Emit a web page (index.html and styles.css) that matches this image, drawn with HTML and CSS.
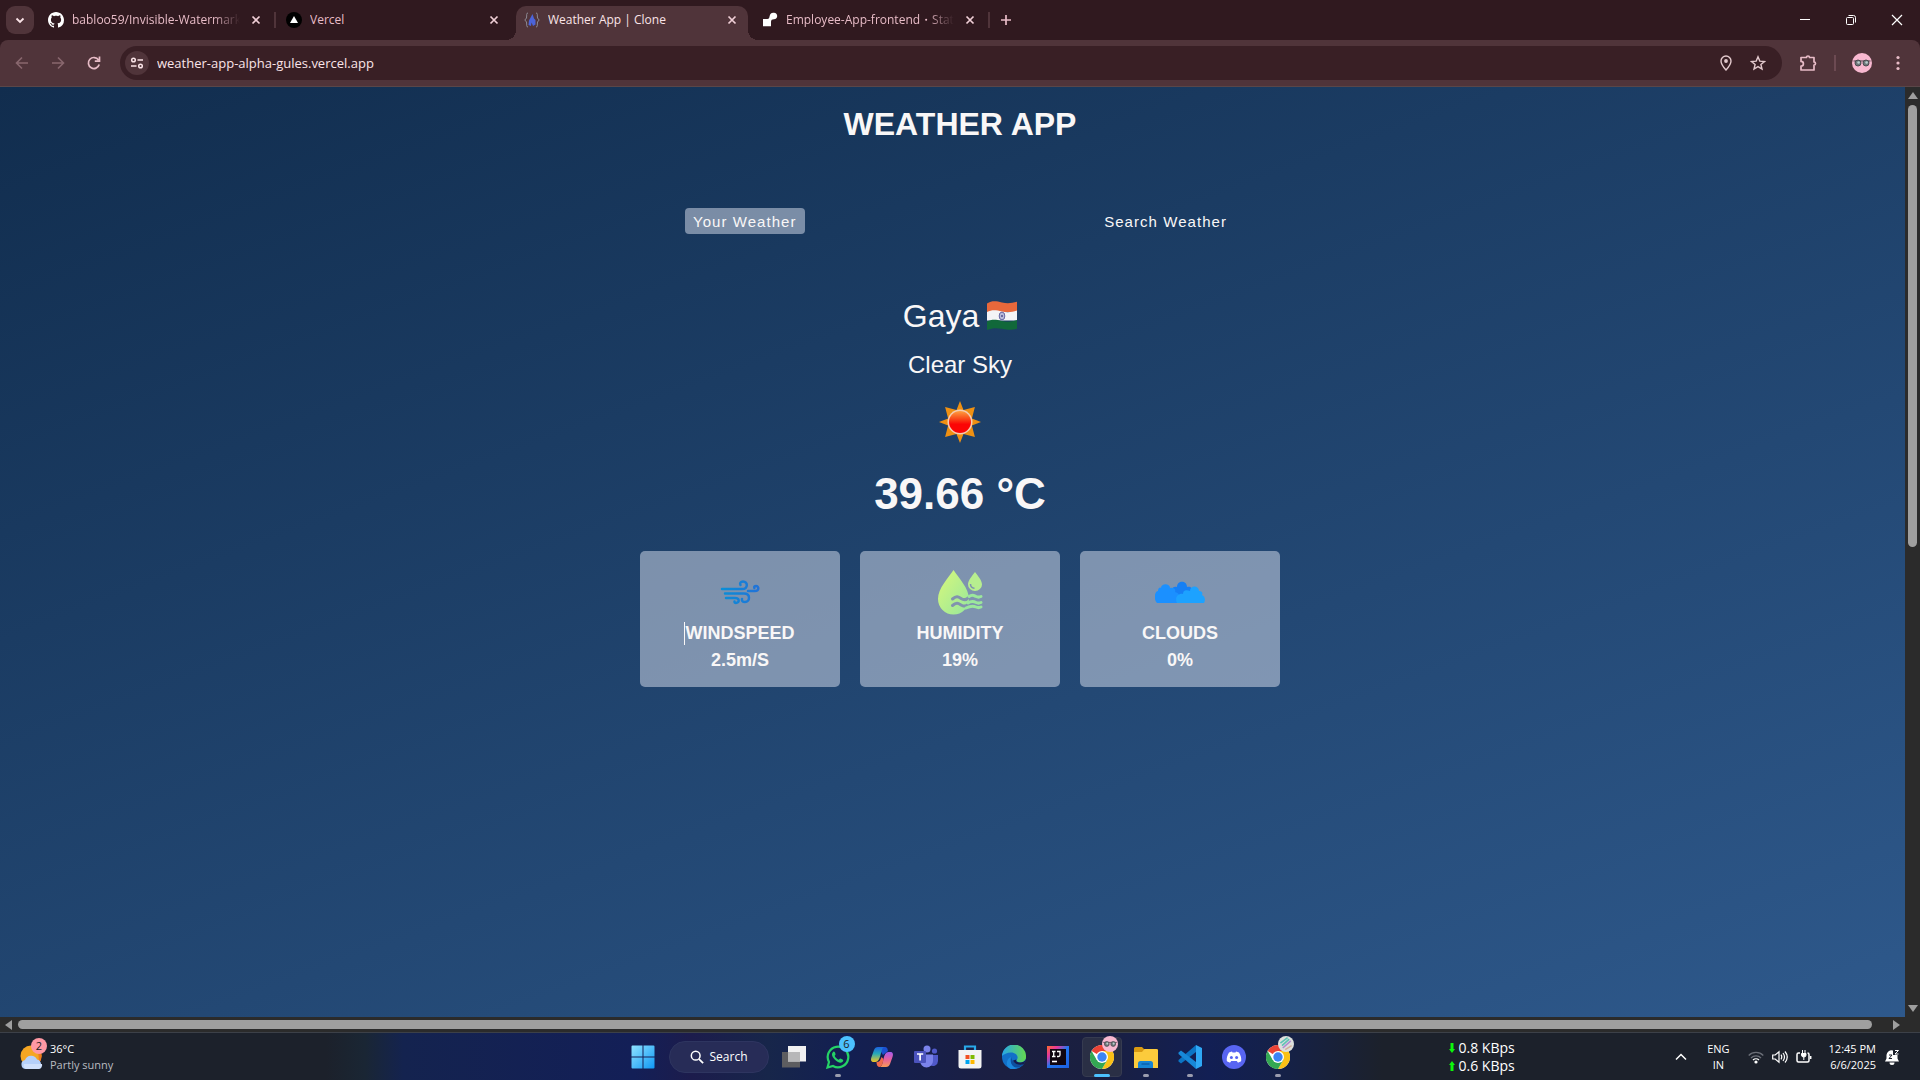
FILE: index.html
```html
<!DOCTYPE html>
<html lang="en">
<head>
<meta charset="utf-8">
<title>Weather App | Clone</title>
<link rel="stylesheet" href="styles.css">
</head>
<body>
<svg class="defs" aria-hidden="true">
  <defs>
    <linearGradient id="winBlue" x1="0" y1="0" x2="1" y2="1"><stop offset="0" stop-color="#8fe3ff"/><stop offset="1" stop-color="#0f98f5"/></linearGradient>
    <linearGradient id="dropGreen" x1="0" y1="0" x2="1" y2="1"><stop offset="0" stop-color="#d9f87a"/><stop offset="1" stop-color="#97e79c"/></linearGradient>
    <linearGradient id="windBlue" gradientUnits="userSpaceOnUse" x1="6" y1="0" x2="44" y2="0"><stop offset="0" stop-color="#0a8fd6"/><stop offset="1" stop-color="#2272d8"/></linearGradient>
    <symbol id="close" viewBox="0 0 16 16"><path d="M4.500 4.500l7 7M11.500 4.500l-7 7" stroke="currentColor" stroke-width="1.700" fill="none"/></symbol>
    <symbol id="chrome" viewBox="0 0 24 24">
      <circle cx="12" cy="12" r="12" fill="#fff"/>
      <path d="M12 12L1.600 6A12 12 0 0 1 22.400 6H12z" fill="#ea4335"/>
      <path d="M22.400 6A12 12 0 0 1 12 24l5.200-9L12 6z" fill="#fbc116"/>
      <path d="M1.600 6A12 12 0 0 0 12 24l5.200-9L12 12 6.800 15z" fill="#34a853"/>
      <circle cx="12" cy="12" r="6" fill="#fff"/><circle cx="12" cy="12" r="4.700" fill="#3d84f5"/>
    </symbol>
    <symbol id="shades" viewBox="0 0 20 20">
      <circle cx="10" cy="10" r="10" fill="#f8b8d0"/>
      <path d="M1.500 8h17" stroke="#4b4148" stroke-width="1"/>
      <circle cx="6" cy="10" r="3" fill="#6d7779" stroke="#4b4a50"/><circle cx="14" cy="10" r="3" fill="#6d7779" stroke="#4b4a50"/>
      <circle cx="6.600" cy="9.500" r="1.300" fill="#b9cdce"/><circle cx="14.600" cy="9.500" r="1.300" fill="#b9cdce"/>
    </symbol>
  </defs>
</svg>

<div class="screen">
  <header class="tab-strip">
    <button class="tab-search" aria-label="Search tabs"><svg viewBox="0 0 16 16"><path d="M4.500 6.500L8 10l3.500-3.500" fill="none" stroke="#fbe4e8" stroke-width="1.800"/></svg></button>
    <nav class="tabs" aria-label="Tabs">
      <div class="tab">
        <svg class="favicon" viewBox="0 0 16 16"><path fill="#fff" d="M8 0C3.580 0 0 3.580 0 8c0 3.540 2.290 6.530 5.470 7.590.4.070.55-.17.55-.38 0-.19-.01-.82-.01-1.490-2.010.37-2.530-.49-2.690-.94-.09-.23-.48-.94-.82-1.130-.28-.15-.68-.52-.01-.53.63-.01 1.080.58 1.230.82.72 1.210 1.870.87 2.330.66.07-.52.28-.87.51-1.070-1.780-.2-3.640-.89-3.640-3.950 0-.87.31-1.590.82-2.150-.08-.2-.36-1.020.08-2.120 0 0 .67-.21 2.200.82.64-.18 1.320-.27 2-.27s1.360.09 2 .27c1.530-1.040 2.200-.82 2.200-.82.44 1.100.16 1.920.08 2.120.51.56.82 1.270.82 2.150 0 3.070-1.870 3.750-3.650 3.950.29.25.54.73.54 1.480 0 1.070-.01 1.930-.01 2.200 0 .21.15.46.55.38A8.010 8.010 0 0 0 16 8c0-4.420-3.580-8-8-8z"/></svg>
        <span class="tab-title fade">babloo59/Invisible-Watermarkin</span>
        <button class="tab-close" aria-label="Close tab"><svg><use href="#close"/></svg></button>
      </div>
      <div class="tab divided">
        <svg class="favicon" viewBox="0 0 16 16"><circle cx="8" cy="8" r="8"/><path d="M8 4l4 7H4z" fill="#fff"/></svg>
        <span class="tab-title">Vercel</span>
        <button class="tab-close" aria-label="Close tab"><svg><use href="#close"/></svg></button>
      </div>
      <div class="tab active">
        <svg class="favicon" viewBox="0 0 16 16"><path d="M4 1C2 1 3 3 2.500 6L.8 8l1.700 2C3 13 2 15 4 15M12 1c2 0 1 2 1.500 5l1.700 2-1.700 2c-.5 3 .5 5-1.500 5" fill="none" stroke="#8d8a94" stroke-width="1"/><path d="M8.500 2L5 8.500 4.500 13 7 14l.5-3.500L9 14l2.500-1.500V8L10 6.500z" fill="#4c63d9"/></svg>
        <span class="tab-title">Weather App | Clone</span>
        <button class="tab-close" aria-label="Close tab"><svg><use href="#close"/></svg></button>
      </div>
      <div class="tab">
        <svg class="favicon" viewBox="0 0 16 16"><path d="M1 7h4.500C8 7 7 4 8.500 2 9.500.8 10.500.8 12 .8c2 0 3.200 1.400 3.200 3.200s-1.200 3.200-3.200 3.200c-2 0-3 .8-3 2.500v4.500H1z" fill="#fff"/></svg>
        <span class="tab-title fade">Employee-App-frontend・Stati</span>
        <button class="tab-close" aria-label="Close tab"><svg><use href="#close"/></svg></button>
      </div>
    </nav>
    <button class="new-tab" aria-label="New tab"><svg viewBox="0 0 16 16"><path d="M8 3v10M3 8h10" stroke="#e8bcc7" stroke-width="1.700"/></svg></button>
    <div class="window-controls">
      <button aria-label="Minimize"><svg viewBox="0 0 12 12"><path d="M1 5.500h10" stroke="#fff"/></svg></button>
      <button aria-label="Restore"><svg viewBox="0 0 12 12"><rect x="1.500" y="3.500" width="7" height="7" rx="1" fill="none" stroke="#fff"/><path d="M3.500 1.500h5a2 2 0 0 1 2 2v5" fill="none" stroke="#fff"/></svg></button>
      <button aria-label="Close window"><svg viewBox="0 0 12 12"><path d="M1 1l10 10M11 1L1 11" stroke="#fff" stroke-width="1.200"/></svg></button>
    </div>
  </header>

  <div class="toolbar">
    <button class="tool dim" aria-label="Back"><svg viewBox="0 0 16 16"><path d="M14 8H3M8 2.500L2.500 8 8 13.500" fill="none" stroke="currentColor" stroke-width="1.600"/></svg></button>
    <button class="tool dim" aria-label="Forward"><svg viewBox="0 0 16 16"><path d="M2 8h11M8 2.500L13.500 8 8 13.500" fill="none" stroke="currentColor" stroke-width="1.600"/></svg></button>
    <button class="tool" aria-label="Reload"><svg viewBox="0 0 16 16"><path d="M13.200 9.500A5.500 5.500 0 1 1 12.500 5M13.500 1.500v4.700H8.800" fill="none" stroke="currentColor" stroke-width="1.700"/></svg></button>
    <div class="address-bar">
      <button class="site-info" aria-label="Site information"><svg viewBox="0 0 16 16"><g fill="none" stroke="#fbe4e8" stroke-width="1.500"><circle cx="4.500" cy="5" r="1.800"/><circle cx="11.500" cy="11" r="1.800"/><path d="M8.500 5H14M2 11h5.500"/></g></svg></button>
      <input class="url" type="text" aria-label="Address" value="weather-app-alpha-gules.vercel.app">
      <button class="bar-icon" aria-label="Location"><svg viewBox="0 0 16 16"><path d="M8 1a5 5 0 0 1 5 5c0 3.500-5 9-5 9S3 9.500 3 6a5 5 0 0 1 5-5z" fill="none" stroke="currentColor" stroke-width="1.400"/><circle cx="8" cy="6" r="1.900" fill="currentColor"/></svg></button>
      <button class="bar-icon" aria-label="Bookmark"><svg viewBox="0 0 16 16"><path d="M8 1.800l1.800 4.300 4.700.4-3.600 3 1.100 4.600L8 11.600l-4 2.500 1.100-4.600-3.600-3 4.700-.4z" fill="none" stroke="currentColor" stroke-width="1.400"/></svg></button>
    </div>
    <button class="tool extensions" aria-label="Extensions"><svg viewBox="0 0 18 18"><path d="M2 3.500h5.500a1.500 1.500 0 0 1 3 0H15V8a1.500 1.500 0 0 1 0 3v5H2v-3.800a2.400 2.400 0 0 0 0-4.800z" fill="none" stroke="currentColor" stroke-width="1.700" stroke-linejoin="round"/></svg></button>
    <span class="tool-divider"></span>
    <button class="profile" aria-label="Profile"><svg><use href="#shades"/></svg></button>
    <button class="menu" aria-label="Menu"><svg viewBox="0 0 16 16"><g fill="currentColor"><circle cx="8" cy="2.500" r="1.600"/><circle cx="8" cy="8" r="1.600"/><circle cx="8" cy="13.500" r="1.600"/></g></svg></button>
  </div>

  <div class="viewport">
    <main class="page">
      <div class="wrapper">
        <h1>WEATHER APP</h1>
        <div class="tab-container">
          <button class="weather-tab current">Your Weather</button>
          <button class="weather-tab">Search Weather</button>
        </div>
        <section class="weather-info">
          <div class="name">
            <p class="city">Gaya</p>
            <svg class="flag" viewBox="0 0 30 30" role="img" aria-label="India"><defs><clipPath id="wave"><path d="M0 2.500C5-.5 9 0 15 1.500S25 2 30 .8v27c-5 1.500-9 1.200-15 0S5 27 0 29z"/></clipPath></defs><g clip-path="url(#wave)"><path fill="#e8683b" d="M0 0h30v11H0z"/><path fill="#f4f4f6" d="M0 11C5 8.500 9 9 15 10.500S25 11 30 9.500v10H0z"/><path fill="#11683a" d="M0 20.500C5 18 9 18.500 15 20s10 .5 15-1v11H0z"/><ellipse cx="15" cy="15" rx="2.800" ry="3.900" fill="#b9bbda" stroke="#6566a2"/><circle cx="15" cy="15" r="1" fill="#50528f"/></g></svg>
          </div>
          <p class="desc">Clear Sky</p>
          <svg class="sun" viewBox="0 0 42 42" role="img" aria-label="Clear sky"><defs><linearGradient id="sunRed" x1="0" y1="0" x2="0" y2="1"><stop offset="0" stop-color="#ffa040"/><stop offset=".35" stop-color="#f94a1a"/><stop offset=".6" stop-color="#fb0505"/></linearGradient></defs>
            <path fill="#ef9012" d="M21 0l3.500 9 11.400-2.900-3 11.400 9.100 3.500-9.100 3.500 3 11.400L24.500 33 21 42l-3.500-9-11.400 2.900 3-11.400L0 21l9.100-3.500-3-11.400L17.500 9z"/>
            <circle cx="21" cy="21" r="12.500" fill="#f5cdb5"/><circle cx="21" cy="21" r="11" fill="url(#sunRed)"/></svg>
          <p class="temp">39.66 °C</p>
          <div class="cards">
            <article class="card">
              <svg class="card-icon" viewBox="0 0 50 50"><g fill="none" stroke="url(#windBlue)" stroke-width="2.500" stroke-linecap="round"><path d="M7 22h20c6.500 0 6-7.500 1-7.500-2.500 0-3.500 2-2.500 3.500"/><path d="M10 26.500h19c7 0 6 8.500 1 8.500-2.500 0-3.500-1.500-3-3"/><path d="M11 31h9c5 0 4.500 5 1 5-1 0-1.500-.5-1.500-1.500"/><path d="M33 24h7c4.500 0 4-5 1-5-1.500 0-2.200 1-1.600 2"/></g></svg>
              <h2 class="caret">WINDSPEED</h2>
              <p>2.5m/S</p>
            </article>
            <article class="card">
              <svg class="card-icon" viewBox="0 0 50 50"><path fill="url(#dropGreen)" d="M18.500 3C13.500 11 3 21 3 32a15.500 15.500 0 0 0 31 0c0-11-10.500-21-15.500-29z"/><path fill="#b7ee8f" d="M40 5c-3 4-7 8.500-7 12.500a7 6.500 0 0 0 14 0C47 13.500 43 9 40 5z"/><path d="M35.500 17c0 2.500 1.500 4 4 4.200" fill="none" stroke="#7f92af" stroke-width="1.500"/><g fill="none" stroke-width="3" stroke-linecap="round"><path stroke="#8193ae" d="M17.500 32c4-3.500 6-2 8.500-.5s5 2 7.500-1M17.500 38.500c4-3.500 6-2 8.500-.5s5 2 7.500-1"/><path stroke="#9be79c" d="M34 29.500c3.500-2.500 5-1 7 0s3 1 5 0M33 36c4-2.500 6-1.500 8-.5s3 1 5 0M31 41c4-2 8-2 10-1s3 1 5 0"/></g></svg>
              <h2>HUMIDITY</h2>
              <p>19%</p>
            </article>
            <article class="card">
              <svg class="card-icon" viewBox="0 0 50 50"><path fill="#167ff5" d="M17 31V23c0-3 3-4 5-3 0-7 10-7 10 0 3-1 6 1 5 4v8z"/><path fill="#1b90ff" d="M2 36c-4-4-2-12 1-12 0-4 3-4 3-3 0-5 9-5 9 0 5-1 6 3 5 4 5 1 6 6 5 11z"/><path fill="#1da2ff" d="M22 36c-3-6 2-10 6-9 0-3 2-5 7-3 0-6 9-6 9 0 3 0 4 2 3 4 4 2 3 6 2 8z"/></svg>
              <h2>CLOUDS</h2>
              <p>0%</p>
            </article>
          </div>
        </section>
      </div>
    </main>
    <div class="scroll-y"><i class="arrow up"></i><i class="thumb-y"></i><i class="arrow down"></i></div>
    <div class="scroll-x"><i class="arrow left"></i><i class="thumb-x"></i><i class="arrow right"></i></div>
  </div>

  <footer class="taskbar">
    <div class="widget">
      <div class="widget-icon">
        <svg viewBox="0 0 24 26"><circle cx="11" cy="12" r="10.500" fill="#f5a623"/><path d="M18 4a10.500 10.500 0 0 1 1 15z" fill="#ee7a1d"/><path d="M6 25a4.500 4.500 0 0 1-1-8.900 6.500 6.500 0 0 1 12-.6A5 5 0 0 1 18 25z" fill="#b5d0fa"/><path d="M6 25a4 4 0 0 1-2-5h18a4 4 0 0 1-3 5z" fill="#cfe0fc"/></svg>
        <span class="badge pink">2</span>
      </div>
      <div class="widget-text"><span>36°C</span><span class="soft">Partly sunny</span></div>
    </div>

    <div class="apps">
      <button class="app" aria-label="Start"><svg viewBox="0 0 24 24"><path fill="url(#winBlue)" d="M.5 1.500a1 1 0 0 1 1-1h10v11H.5zM12.500.5h10a1 1 0 0 1 1 1v10h-11zM.5 12.500h11v11h-10a1 1 0 0 1-1-1zM12.500 12.500h11v10a1 1 0 0 1-1 1h-10z"/></svg></button>
      <button class="search"><svg viewBox="0 0 16 16"><circle cx="6.500" cy="6.500" r="5" fill="none" stroke="#fff" stroke-width="1.700"/><path d="M10.300 10.300L15 15" stroke="#fff" stroke-width="2"/></svg>Search</button>
      <button class="app" aria-label="Task view"><svg viewBox="0 0 24 24"><path fill="#5d5d60" d="M0 7h18v15.500H0z"/><path fill="#f1f1f1" d="M6 1h18v15.500H6z"/><path fill="#b7b7b8" d="M6 7h12v9.500H6z"/></svg></button>
      <button class="app open" aria-label="WhatsApp"><svg viewBox="0 0 24 24"><path d="M1.500 22.500L3 17a10.300 10.300 0 1 1 4 4z" fill="none" stroke="#25d366" stroke-width="2.200"/><path fill="#25d366" d="M8 6.500c1 0 1.500 2.500 1.500 3s-1 1.200-.8 1.600c.8 1.600 2 2.800 3.800 3.600.6.200 1.200-1.200 1.800-1.200s3 1.200 3 1.700c0 1.700-1.800 2.700-3.200 2.500C10 17 6.500 12.500 6 10c-.3-1.500 1-3.500 2-3.500z"/></svg><span class="badge sky">6</span></button>
      <button class="app" aria-label="Copilot"><svg viewBox="0 0 24 24"><defs><linearGradient id="copA" x1="0" y1="0" x2="0" y2="1"><stop stop-color="#1c62e0"/><stop offset=".45" stop-color="#26a9b8"/><stop offset="1" stop-color="#f3c521"/></linearGradient><linearGradient id="copB" x1="0" y1="0" x2="0" y2="1"><stop stop-color="#a45bf0"/><stop offset=".5" stop-color="#e8609b"/><stop offset="1" stop-color="#fb9a55"/></linearGradient></defs><path fill="#1b50d0" d="M8 2h7c2 0 2.500 2 3 4l-5 4z"/><path fill="url(#copA)" d="M8 2h6c-2 1-2.500 4-3.500 8S8 17 5.500 17H4c-3 0-3.500-2-2.500-5L4 5c.8-2 2-3 4-3z"/><path fill="url(#copB)" d="M16 22h-6c2-1 2.500-4 3.500-8s2-7 5-7H20c3 0 3.500 2 2.500 5L20 19c-.8 2-2 3-4 3z"/><path fill="#f26a4c" d="M10 22c-2.500 0-3.500-2-3.500-5 3 0 4-2 5-5l2 2c-1 5-1.500 7-3.500 8z"/></svg></button>
      <button class="app" aria-label="Teams"><svg viewBox="0 0 24 24"><circle cx="13" cy="4" r="3.500" fill="#7b83eb"/><circle cx="20.500" cy="6" r="2.600" fill="#5059c9"/><path d="M15 10h9v6a5 5 0 0 1-8 4z" fill="#5059c9"/><path d="M6 9.500h13V16a6.500 6.500 0 0 1-13 0z" fill="#7b83eb"/><rect y="6" width="12" height="12" rx="1" fill="#4b53bc"/><path d="M3 9h6.200M6.100 9v6.500" stroke="#fff" stroke-width="1.700"/></svg></button>
      <button class="app" aria-label="Store"><svg viewBox="0 0 24 24"><path d="M7 6V1.500h10V6" fill="none" stroke="#28a9ea" stroke-width="2.200"/><path fill="#f3f3f3" d="M.5 5h23v16a2.500 2.500 0 0 1-2.500 2.500H3A2.500 2.500 0 0 1 .5 21z"/><path fill="#f25022" d="M7.500 10h4v4h-4z"/><path fill="#7fba00" d="M12.500 10h4v4h-4z"/><path fill="#00a4ef" d="M7.500 15h4v4h-4z"/><path fill="#ffb900" d="M12.500 15h4v4h-4z"/></svg></button>
      <button class="app" aria-label="Edge"><svg viewBox="0 0 24 24"><defs><linearGradient id="edgeA" x1="0" y1="0" x2="1" y2="0"><stop stop-color="#27a6e8"/><stop offset="1" stop-color="#64d84e"/></linearGradient></defs><circle cx="12" cy="12" r="12" fill="#1270c8"/><path fill="url(#edgeA)" d="M0 11A12 12 0 0 1 24 12c0 4-3.500 5.500-6 5.500-3 0-4-1.500-3-3 2-3-1-7-6-7-4 0-7.500 2-9 3.500z"/><path fill="#0d4f9e" d="M9 12c-2 5 1 11 7 10.500 3-.5 5-3 6-4.500-3 1.500-11 2-13-6z"/><path d="M8.500 24C3 21.500 4 14 9 12c-1.500 5 1 11 7 10.800-2 1.200-5 1.600-7.500 1.200z" fill="#1b88de"/><path d="M14.500 14.500c-1 1.500 0 3 3.500 3 2.500 0 5-1 6-3.500-.3 2-1 3.500-2 5-1.500 1-9 1.500-11-3.500z" fill="#141d4e"/></svg></button>
      <button class="app ij" aria-label="IntelliJ IDEA"><svg viewBox="0 0 24 24"><defs><linearGradient id="ijA" x1="0" y1="0" x2="1" y2="1"><stop stop-color="#fe6a2c"/><stop offset=".25" stop-color="#e8389a"/><stop offset=".5" stop-color="#2275f0"/><stop offset="1" stop-color="#1c5fe0"/></linearGradient></defs><path fill="url(#ijA)" d="M1 1h22v22H1z"/><path d="M4 4h16v16H4z" fill="#100510"/><path d="M6 6.500h3.500M6 11.500h3.500M7.700 6.500v5M11 6.500h3v3.500q0 1.500-1.500 1.500H11" stroke="#fff" stroke-width="1.300" fill="none"/><path d="M6 16.500h5" stroke="#fff" stroke-width="1.600"/></svg></button>
      <button class="app focused" aria-label="Chrome"><svg><use href="#chrome"/></svg><span class="badge face"><svg><use href="#shades"/></svg></span></button>
      <button class="app open" aria-label="File Explorer"><svg viewBox="0 0 24 24"><path d="M0 3.500A1.500 1.500 0 0 1 1.500 2H8l2.500 2.500H24V9H0z" fill="#d99a12"/><path d="M0 7h8l2.500-3H22.500A1.500 1.500 0 0 1 24 5.500V23H0z" fill="#fccb3c"/><path d="M4 23v-4.500A2.500 2.500 0 0 1 6.500 16h10a2.500 2.500 0 0 1 2.500 2.500V23z" fill="#1684d4"/><path d="M7.500 19h8" stroke="#0a5ca8" stroke-width="1.300"/></svg></button>
      <button class="app open" aria-label="Visual Studio Code"><svg viewBox="0 0 24 24"><path fill="#0b74c4" d="M18 0v7L3 18.500.5 16.500v-1.500z"/><path fill="#1788d8" d="M18 24v-7L3 5.500.5 7.500V9z"/><path fill="#2ea8f5" d="M18 0l6 3v18l-6 3z"/></svg></button>
      <button class="app" aria-label="Discord"><svg viewBox="0 0 24 24"><circle cx="12" cy="12" r="12" fill="#5865f2"/><path fill="#fff" d="M7 7.500L10 6.500l.5 1h3l.5-1 3 1c1.800 3 2.500 5.500 2.200 8.500-1.200 1-2.300 1.400-3.400 1.600l-1-1.600H9.200l-1 1.600c-1.100-.2-2.200-.6-3.400-1.600C4.500 13 5.200 10.500 7 7.500z"/><circle cx="9.400" cy="12.600" r="1.500" fill="#5865f2"/><circle cx="14.600" cy="12.600" r="1.500" fill="#5865f2"/></svg></button>
      <button class="app open" aria-label="Chrome, second profile"><svg><use href="#chrome"/></svg><span class="badge face"><svg viewBox="0 0 20 20"><circle cx="10" cy="10" r="10" fill="#dcdfdc"/><path d="M3 9l9-7M5 12l9-8" stroke="#5cc3b4" stroke-width="2"/><path d="M6 15l10-9" stroke="#b18ad0" stroke-width="2"/><path d="M9 17l8-5" stroke="#d2b09a" stroke-width="2"/></svg></span></button>
    </div>

    <div class="tray">
      <div class="net">
        <span><svg viewBox="0 0 8 12"><path d="M2.500 1h3v6H7l-3 4-3-4h1.500z" fill="#0cf50c"/></svg>0.8 KBps</span>
        <span><svg viewBox="0 0 8 12"><path d="M2.500 11h3V5H7L4 1 1 5h1.500z" fill="#0cf50c"/></svg>0.6 KBps</span>
      </div>
      <button class="chevron" aria-label="Hidden icons"><svg viewBox="0 0 12 12"><path d="M1 8.500l5-5 5 5" fill="none" stroke="#fff" stroke-width="1.500"/></svg></button>
      <div class="lang"><span>ENG</span><span>IN</span></div>
      <div class="status">
        <svg viewBox="0 0 16 16"><g fill="none" stroke-width="1.300"><path d="M.7 6.500a10.300 10.300 0 0 1 14.600 0M3 9a7 7 0 0 1 10 0" stroke="#6b6f78"/><path d="M5 11a4.300 4.300 0 0 1 6 0" stroke="#fff"/></g><circle cx="8" cy="13" r="1.600" fill="#fff"/></svg>
        <svg viewBox="0 0 16 16"><g fill="none" stroke="#fff" stroke-width="1.200"><path d="M.7 6h2.500L7 2.700v10.600L3.200 10H.7z"/><path d="M9 5.700q1.500 2.300 0 4.600M11 4q3 4 0 8M13 2.500q4.500 5.500 0 11"/></g></svg>
        <svg viewBox="0 0 16 16"><path d="M4 4H2.500A1.500 1.500 0 0 0 1 5.500v6A1.500 1.500 0 0 0 2.500 13h9a1.500 1.500 0 0 0 1.500-1.500v-6A1.500 1.500 0 0 0 11.500 4M14.700 7v3" fill="none" stroke="#fff" stroke-width="1.500"/><path d="M6.500 1v3M9 1v3M5.500 4.500h4.500v1.500q0 2-2.200 2-2.300 0-2.300-2zM7.800 8v3" fill="#fff" stroke="#fff"/></svg>
      </div>
      <div class="clock"><span>12:45 PM</span><span>6/6/2025</span></div>
      <button class="bell" aria-label="Notifications"><svg viewBox="0 0 16 16"><path fill="#fff" d="M1 12.500l1.500-3V6A5 5 0 0 1 9 1.500V6h4.500v3.500l1.500 3zM5.500 13.500h5a2.500 2.500 0 0 1-5 0z"/><path d="M11 1.500h3.500L11 5h3.500" fill="none" stroke="#fff"/><path d="M5 6h3L5 9.500h3" fill="none" stroke="#1c212b"/></svg></button>
    </div>
  </footer>
</div>
</body>
</html>
```

FILE: styles.css
```css
* { box-sizing: border-box; margin: 0; padding: 0; }

body { font-family: "Open Sans", "Noto Sans", sans-serif; font-size: 12px; background: #1c212b; color: #fff; }
button, input { font: inherit; color: inherit; background: none; border: 0; }
svg { display: block; flex: none; }
.defs { position: absolute; width: 0; height: 0; }
.screen { display: flex; flex-direction: column; height: 100vh; overflow: hidden; }

/* Tab strip */
.tab-strip { display: flex; align-items: center; height: 40px; flex: none; padding-left: 6px; background: #30191f; }
.tab-search { display: grid; place-items: center; width: 28px; height: 28px; margin-right: 6px; border-radius: 9px; background: #50343a; }
.tab-search svg, .tab-close svg, .new-tab svg { width: 16px; height: 16px; }
.tabs { display: flex; align-self: stretch; padding-top: 6px; flex: 0 1 952px; min-width: 0; }
.tab { position: relative; display: flex; align-items: center; flex: 1 1 0; min-width: 0; margin-right: 6px; padding: 0 8px 6px; color: #e8bcc7; }
.favicon { width: 16px; height: 16px; }
.tab-title { flex: 1; min-width: 0; margin: 0 8px; overflow: hidden; white-space: nowrap; line-height: 18px; }
.fade { -webkit-mask-image: linear-gradient(90deg, #000 84%, transparent); mask-image: linear-gradient(90deg, #000 84%, transparent); }
.tab-close { color: #f0cfd6; }
.divided::before, .tab:last-child::after { content: ""; position: absolute; left: -4px; top: 6px; width: 2px; height: 16px; background: #50343a; }
.tab:last-child::after { left: auto; right: -4px; }
.active { background: #50343a; border-radius: 10px 10px 0 0; color: #fbe4e8; }
.active::before, .active::after { content: ""; position: absolute; bottom: 0; width: 10px; height: 10px; }
.active::before { right: 100%; background: radial-gradient(circle at 0 0, transparent 10px, #50343a 10px); }
.active::after { left: 100%; background: radial-gradient(circle at 100% 0, transparent 10px, #50343a 10px); }
.new-tab { margin-left: 6px; }
.window-controls { display: flex; margin-left: auto; }
.window-controls button { display: grid; place-items: center; width: 46px; height: 40px; }
.window-controls svg { width: 12px; height: 12px; }

/* Toolbar */
.toolbar { display: flex; align-items: center; height: 47px; flex: none; padding: 0 14px 0 4px; background: #50343a; border-bottom: 1px solid #5a4648; border-radius: 8px 8px 0 0; box-shadow: 0 -8px 0 #30191f; clip-path: inset(0); color: #e8bcc7; }
.tool { display: grid; place-items: center; width: 36px; height: 32px; }
.tool svg { width: 16px; height: 16px; }
.dim { color: #89676e; }
.address-bar { display: flex; align-items: center; flex: 1; min-width: 0; height: 34px; margin-left: 8px; padding: 0 8px 0 5px; border-radius: 17px; background: #391f25; color: #e3c9cd; }
.site-info { display: grid; place-items: center; width: 24px; height: 24px; border-radius: 12px; background: #50343a; }
.site-info svg { width: 16px; height: 16px; }
.url { flex: 1; min-width: 0; margin-left: 8px; font-size: 13px; color: #fbe4e8; outline: 0; }
.bar-icon { display: grid; place-items: center; width: 32px; height: 32px; }
.bar-icon svg { width: 16px; height: 16px; }
.extensions { margin-left: 8px; }
.extensions svg { width: 18px; height: 18px; }
.tool-divider { width: 2px; height: 16px; margin: 0 16px 0 8px; background: #6c4a52; }
.profile svg { width: 20px; height: 20px; }
.menu { margin-left: 18px; }
.menu svg { width: 16px; height: 16px; }

/* Browser viewport with its scrollbars */
.viewport { display: grid; grid-template: minmax(0, 1fr) 15px / minmax(0, 1fr) 15px; flex: 1; min-height: 0; background: #2b2b2b; }
.page { overflow: hidden; background: linear-gradient(160deg, #112d4e 0%, #3f72af 100%) 0 0 / 100vw 200%; }
.scroll-y { display: flex; flex-direction: column; align-items: center; padding: 5px 0; }
.scroll-x { display: flex; align-items: center; padding: 0 5px; }
.arrow { border: 5px solid transparent; }
.up { border-bottom: 7px solid #9f9f9f; border-top: 0; }
.down { margin-top: auto; border-top: 7px solid #9f9f9f; border-bottom: 0; }
.left { border-right: 7px solid #9f9f9f; border-left: 0; }
.right { margin-left: auto; border-left: 7px solid #9f9f9f; border-right: 0; }
.thumb-y { width: 9px; height: 48%; margin-top: 6px; border-radius: 5px; background: #9f9f9f; }
.thumb-x { flex: 1; height: 9px; margin: 0 21px 0 6px; border-radius: 5px; background: #9f9f9f; }

/* Weather app */
.wrapper { display: flex; flex-direction: column; align-items: center; width: 100vw; padding-top: 19px; font-family: "Liberation Sans", Arial, sans-serif; color: #f9f7f7; }
h1 { font-size: 32px; line-height: 36px; }
.tab-container { display: flex; justify-content: space-between; width: 550px; margin-top: 66px; }
.weather-tab { height: 26px; padding: 0 8px; border-radius: 4px; font-size: 15px; letter-spacing: .07em; }
.current { background: rgba(219, 226, 239, .5); }
.weather-info { display: flex; flex-direction: column; align-items: center; margin-top: 64px; }
.name { display: flex; align-items: center; gap: 8px; }
.city { font-size: 32px; line-height: 36px; }
.flag { width: 30px; height: 30px; }
.desc { margin-top: 17px; font-size: 24px; line-height: 28px; }
.sun { width: 42px; height: 42px; margin-top: 22px; }
.temp { margin-top: 25px; font-size: 44px; font-weight: bold; line-height: 52px; }
.cards { display: flex; gap: 20px; margin-top: 31px; }
.card { display: flex; flex-direction: column; align-items: center; width: 200px; padding: 16px 16px 15px; border-radius: 5px; background: rgba(219, 226, 239, .5); font-size: 18px; font-weight: bold; line-height: 23px; }
.card-icon { width: 50px; height: 50px; }
.card h2 { margin-top: 5px; font-size: 18px; }
.card p { margin-top: 4px; }
.caret { box-shadow: -1px 0 0 #f9f7f7; }

/* Taskbar */
.taskbar { display: grid; grid-template-columns: 1fr auto 1fr; flex: none; height: 48px; border-top: 1px solid #3c4048; background: linear-gradient(90deg, #1c212b 17%, #1a2634 19%, #14234f 21%, #131f57 33%, #1c1c4c 36%, #17264a 40%, #131f52 44%, #1b1f42 52%, #1a1f40 57%, #121f54 63%, #152147 67%, #1c212b 72%); }
.widget { display: flex; align-items: center; gap: 6px; padding-left: 20px; }
.widget-icon { position: relative; }
.widget-icon svg { width: 24px; height: 26px; }
.widget-text, .lang, .clock { display: flex; flex-direction: column; font-size: 11px; line-height: 16px; }
.soft { color: #b9bbc0; }
.badge { position: absolute; display: grid; place-items: center; width: 16px; height: 16px; border-radius: 8px; color: #222; font-size: 11px; line-height: 16px; }
.pink { top: -6px; right: -3px; background: #ff99a4; }
.sky { top: 2px; right: 5px; background: #4cc2ff; }
.face { top: 2px; right: 6px; }
.apps { display: flex; align-items: center; }
.app { position: relative; display: grid; place-items: center; width: 44px; height: 46px; }
.app > svg { width: 24px; height: 24px; }
.face svg { width: 16px; height: 16px; }
.open::after, .focused::after { content: ""; position: absolute; bottom: 3px; left: 19px; width: 6px; height: 3px; border-radius: 2px; background: #9a9cae; }
.focused::after { left: 14px; width: 16px; background: #4cc2ff; }
.focused::before { content: ""; position: absolute; inset: 3px 2px; border: 1px solid #363b50; border-radius: 4px; background: #2a2f45; }
.focused > svg, .focused > span { z-index: 1; }
.focused > svg { position: relative; }
.search { display: flex; align-items: center; justify-content: center; gap: 6px; width: 100px; height: 32px; margin: 0 3px 0 4px; border: 1px solid #2e3560; border-radius: 16px; background: #272c57; }
.search svg { width: 14px; height: 14px; }
.tray { display: flex; align-items: center; padding-right: 20px; }
.net { display: flex; flex-direction: column; margin-left: 148px; font-size: 14px; line-height: 18px; white-space: nowrap; }
.net span { display: flex; align-items: center; gap: 3px; }
.net svg { width: 8px; height: 12px; }
.chevron { margin-left: auto; }
.chevron svg { width: 12px; height: 12px; }
.lang { align-items: center; margin: 0 18px 0 20px; }
.status { display: flex; gap: 8px; }
.status svg { width: 16px; height: 16px; }
.clock { align-items: flex-end; margin: 0 8px 0 17px; white-space: nowrap; }
.bell svg { width: 16px; height: 16px; }
```
